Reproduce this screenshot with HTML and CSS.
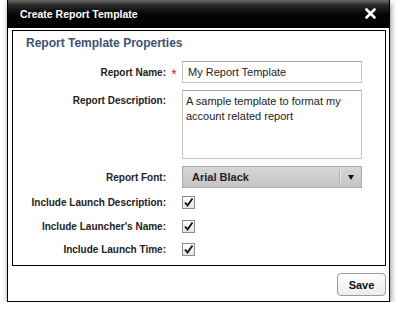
FILE: index.html
```html
<!DOCTYPE html>
<html>
<head>
    <meta charset="utf-8">
    <title>Create Report Template</title>
    <link rel="stylesheet" href="styles.css">
</head>
<body>
    <div class="dialog">
        <div class="titlebar">
            <span class="title">Create Report Template</span>
            <svg class="close" width="11" height="11" viewBox="0 0 11 11">
                <path d="M1.5 1.5 L9.5 9.5 M9.5 1.5 L1.5 9.5" stroke="#fff" stroke-width="2.6" stroke-linecap="round"/>
            </svg>
        </div>
        <div class="content">
            <div class="panel">
                <h2>Report Template Properties</h2>
                <div class="form">
                    <label class="lbl center">Report Name:</label>
                    <span class="req">*</span>
                    <div class="input">My Report Template</div>

                    <label class="lbl top">Report Description:</label>
                    <span></span>
                    <div class="textarea">A sample template to format my account related report</div>

                    <label class="lbl center">Report Font:</label>
                    <span></span>
                    <div class="select">
                        <span class="select-text">Arial Black</span>
                        <span class="select-arrow"></span>
                    </div>
                </div>
                <div class="checks">
                    <div class="check-row">
                        <label class="lbl">Include Launch Description:</label>
                        <span></span>
                        <span class="checkbox"><svg width="11" height="11" viewBox="0 0 11 11"><path d="M2 5.5 L4.5 8.5 L9.5 1.5" fill="none" stroke="#111" stroke-width="1.9"/></svg></span>
                    </div>
                    <div class="check-row">
                        <label class="lbl">Include Launcher's Name:</label>
                        <span></span>
                        <span class="checkbox"><svg width="11" height="11" viewBox="0 0 11 11"><path d="M2 5.5 L4.5 8.5 L9.5 1.5" fill="none" stroke="#111" stroke-width="1.9"/></svg></span>
                    </div>
                    <div class="check-row">
                        <label class="lbl">Include Launch Time:</label>
                        <span></span>
                        <span class="checkbox"><svg width="11" height="11" viewBox="0 0 11 11"><path d="M2 5.5 L4.5 8.5 L9.5 1.5" fill="none" stroke="#111" stroke-width="1.9"/></svg></span>
                    </div>
                </div>
            </div>
        </div>
        <div class="footer">
            <button class="save">Save</button>
        </div>
    </div>
</body>
</html>
```

FILE: styles.css
```css
* {
    box-sizing: border-box;
}
body {
    margin: 0;
    background: #fff;
    font-family: "Liberation Sans", Arial, sans-serif;
}
.dialog {
    margin-left: 7px;
    width: 383px;
    border: 1px solid #000;
    border-top: none;
    background: #fff;
    box-shadow: 1px 3px 6px rgba(0, 0, 0, 0.45);
}
.titlebar {
    height: 28px;
    display: flex;
    align-items: center;
    justify-content: space-between;
    padding: 0 13px 1px 12px;
    background: linear-gradient(to bottom, #6a6a6a 0px, #2a2a2a 5px, #060606 14px, #000 100%);
}
.title {
    color: #fff;
    font-size: 10.5px;
    font-weight: bold;
}
.close {
    display: block;
}
.content {
    padding: 2px 3px 0 4px;
}
.panel {
    height: 236px;
    border: 1px solid #000;
    padding: 4px 0 0 13px;
}
h2 {
    margin: 0 0 10px 0;
    font-size: 12px;
    line-height: 16px;
    font-weight: bold;
    color: #3b5374;
}
.form {
    display: grid;
    grid-template-columns: 140px 16px 180px;
    row-gap: 7px;
}
.lbl {
    font-size: 10px;
    font-weight: bold;
    color: #222;
    text-align: right;
}
.lbl.center {
    align-self: center;
}
.lbl.top {
    padding-top: 5px;
}
.req {
    color: #d21f1f;
    font-size: 14px;
    text-align: center;
    align-self: center;
    padding-top: 3px;
}
.input {
    height: 22px;
    border: 1px solid #c4c4c4;
    border-top-color: #a8a8a8;
    padding: 4px 0 0 5px;
    font-size: 11px;
    color: #222;
}
.textarea {
    height: 69px;
    border: 1px solid #c4c4c4;
    border-top-color: #a8a8a8;
    padding: 3px 6px 0 3px;
    font-size: 11px;
    line-height: 15px;
    color: #222;
}
.select {
    height: 22px;
    display: flex;
    align-items: center;
    border: 1px solid #a9a9a9;
    background: linear-gradient(to bottom, #d6d6d6, #c6c6c6);
}
.select-text {
    flex: 1;
    padding-left: 9px;
    font-size: 11px;
    font-weight: bold;
    color: #222;
}
.select-arrow {
    width: 21px;
    height: 14px;
    border-left: 1px solid #e8e8e8;
    box-shadow: -1px 0 0 #b0b0b0;
    position: relative;
}
.select-arrow::after {
    content: "";
    position: absolute;
    left: 7px;
    top: 5px;
    border-left: 3.5px solid transparent;
    border-right: 3.5px solid transparent;
    border-top: 5px solid #111;
}
.checks {
    margin-top: 3px;
}
.check-row {
    display: grid;
    grid-template-columns: 140px 16px 180px;
    align-items: center;
    height: 23.5px;
}
.checkbox {
    width: 13px;
    height: 13px;
    border: 1px solid #8d8d8d;
    background: linear-gradient(to bottom, #fff, #e4e4e4);
    display: flex;
    align-items: center;
    justify-content: center;
}
.checkbox svg {
    display: block;
}
.footer {
    display: flex;
    justify-content: flex-end;
    padding: 7px 3px 5px 0;
}
.save {
    width: 49px;
    height: 23px;
    border: 1px solid #9a9a9a;
    border-radius: 4px;
    background: linear-gradient(to bottom, #fff, #ececec);
    font-family: "Liberation Sans", Arial, sans-serif;
    font-size: 11px;
    font-weight: bold;
    color: #111;
    padding: 0;
}
```
